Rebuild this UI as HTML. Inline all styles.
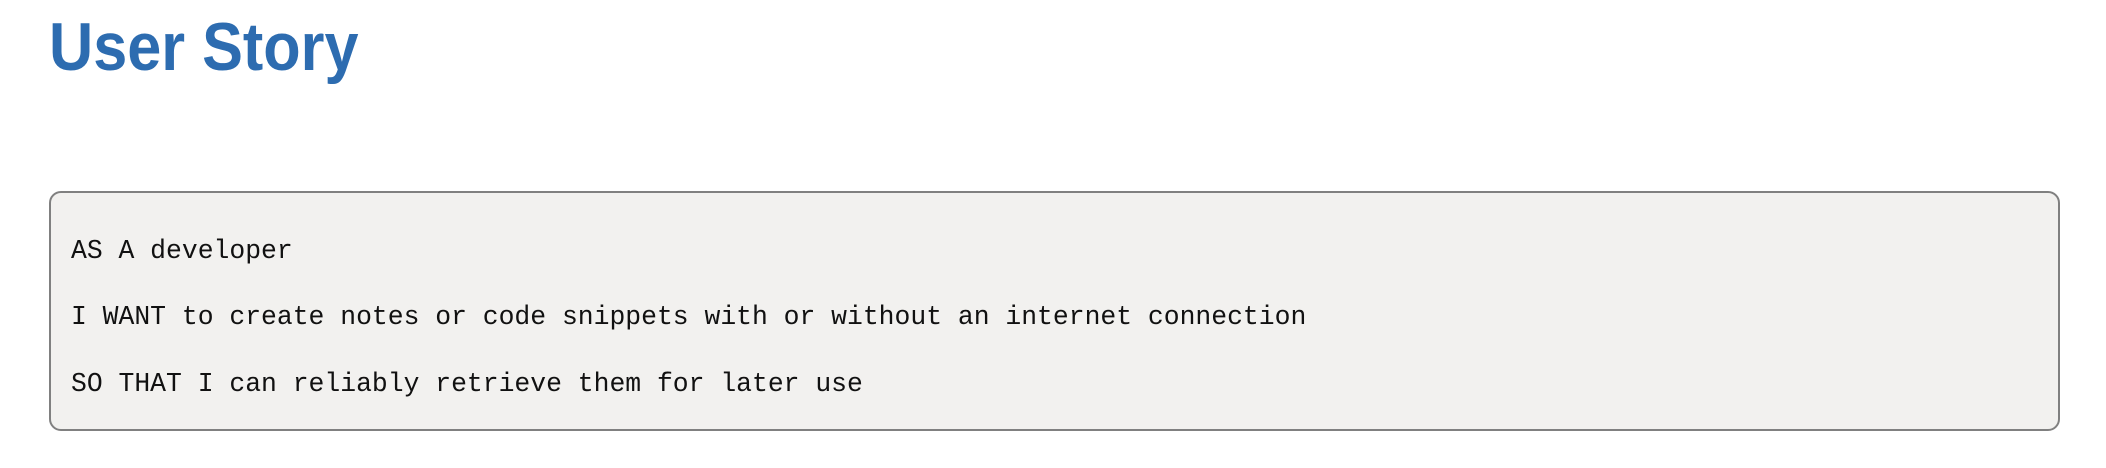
<!DOCTYPE html>
<html><head><meta charset="utf-8"><style>
html,body{margin:0;padding:0;background:#fff;width:2106px;height:468px;overflow:hidden}
h1{position:absolute;left:49px;top:1px;margin:0;font-family:"Liberation Sans",sans-serif;font-weight:bold;font-size:68px;line-height:92px;color:#2d6cb0;transform:scaleX(0.9);transform-origin:0 0;white-space:nowrap}
.box{position:absolute;left:49px;top:191px;width:2007px;height:236px;border:2px solid #808080;border-radius:12px;background:#f2f1ef;box-sizing:content-box}
.box p{position:absolute;left:20px;margin:0;font-family:"Liberation Mono",monospace;font-size:26.4px;line-height:30px;color:#111;white-space:pre}
</style></head><body>
<h1>User Story</h1>
<div class="box">
<p style="top:43px">AS A developer</p>
<p style="top:109px">I WANT to create notes or code snippets with or without an internet connection</p>
<p style="top:176px">SO THAT I can reliably retrieve them for later use</p>
</div>
</body></html>
